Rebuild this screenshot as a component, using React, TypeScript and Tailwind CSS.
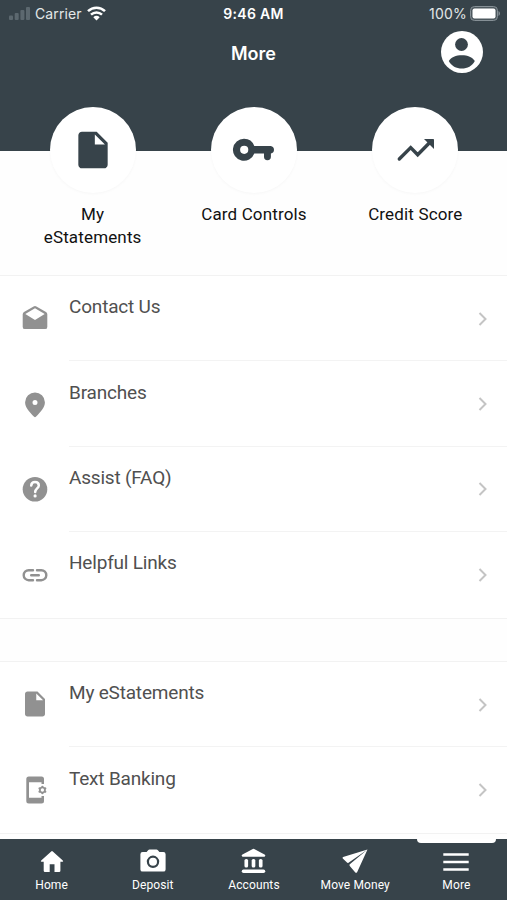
import React from "react";
import { MdInsertDriveFile } from "react-icons/md";

interface Item {
  label: string;
  icon: React.ReactNode;
}

const KeyIcon = () => (
  <svg width="44" height="44" viewBox="0.5 0 44 44" fill="currentColor">
    <path
      fillRule="evenodd"
      d="M12.600 10.800a11 11 0 0 1 10.200 7.200H39.200a3.800 3.800 0 0 1 .2 7.500v3.300a3.400 3.400 0 0 1-6.900 0v-3.300h-9.700A11 11 0 1 1 12.600 10.800zM12.700 17.700a4.100 4.100 0 1 0 0 8.200 4.100 4.100 0 0 0 0-8.200z"
    />
  </svg>
);

const TrendIcon = () => (
  <svg width="44" height="44" viewBox="0 0 44 44">
    <path
      d="m6.300 31 11.400-11.400 7 7.200L37.500 13.800"
      fill="none"
      stroke="currentColor"
      strokeWidth="3.400"
      strokeLinecap="round"
    />
    <path d="M31 11h9.300q.7 0 .7.700V21z" fill="currentColor" />
  </svg>
);

const MailIcon = () => (
  <svg width="30" height="30" viewBox="0 0 30 30" fill="currentColor">
    <path
      fillRule="evenodd"
      d="M13.600 3.400q1.400-.8 2.800 0l9.600 5.500q1.300.8 1.300 2.300v12.700q0 2.200-2.200 2.200H4.900q-2.200 0-2.200-2.200V11.200q0-1.500 1.300-2.300zM15 5.300 5.300 10.900 15 17.100l9.700-6.200z"
    />
  </svg>
);

const PinIcon = () => (
  <svg width="30" height="30" viewBox="0 0 30 30" fill="currentColor">
    <path
      fillRule="evenodd"
      d="M15 3.500a9.900 9.900 0 0 1 9.900 9.700c0 5.200-4 9.400-9 14.500q-.9.900-1.800 0c-5-5.100-9-9.300-9-14.500A9.900 9.900 0 0 1 15 3.500zM15 11a2.500 2.500 0 1 0 0 5 2.500 2.500 0 0 0 0-5z"
    />
  </svg>
);

const HelpIcon = () => (
  <svg width="30" height="30" viewBox="0 0 30 30">
    <circle cx="15" cy="15.200" r="12.300" fill="currentColor" />
    <path
      d="M11.200 11.600c.2-2.300 1.800-3.500 3.800-3.500 2.200 0 3.800 1.400 3.800 3.300 0 2.900-3.600 3.100-3.600 6.600"
      fill="none"
      stroke="white"
      strokeWidth="2.500"
      strokeLinecap="round"
    />
    <circle cx="15.100" cy="21.900" r="1.600" fill="white" />
  </svg>
);

const LinkIcon = () => (
  <svg width="30" height="30" viewBox="0 0 30 30" fill="none" stroke="currentColor" strokeWidth="2.400" strokeLinecap="round">
    <path d="M13 10.200H8.700a5 5 0 0 0 0 10H13M17 10.200h4.300a5 5 0 0 1 0 10H17M11.200 15.200h7.600" />
  </svg>
);

const PhoneIcon = () => (
  <svg width="30" height="30" viewBox="0 0 30 30" fill="currentColor">
    <path d="M8.800 1.500h12.700q2.500 0 2.500 2.500v5h-2.500V7.300H9v15.400h12.500V21H24v5q0 2.500-2.500 2.500H8.800q-2.500 0-2.500-2.500V4q0-2.500 2.500-2.500z" />
    <path d="M22.400 11.800v6.400M19.600 13.400l5.600 3.200M25.200 13.400l-5.600 3.200" stroke="currentColor" strokeWidth="2.300" strokeLinecap="round" />
    <circle cx="22.400" cy="15" r="3.300" />
    <circle cx="22.400" cy="15" r="1.700" fill="white" />
  </svg>
);

const ProfileIcon = () => (
  <svg className="justify-self-end" width="42" height="42" viewBox="0 0 42 42">
    <circle cx="21" cy="21" r="21" fill="white" />
    <circle cx="20.500" cy="13.500" r="6.400" fill="#37434a" />
    <path d="M7.800 30C10 26 15 24.200 20.800 24.200S31.500 26 33.800 30c-2.500 5-7.500 7.500-13 7.500S10.300 35 7.800 30z" fill="#37434a" />
  </svg>
);

const HomeIcon = () => (
  <svg width="24" height="24" viewBox="0 0.5 24 24" fill="currentColor">
    <path d="M11.200 1.900q.8-.7 1.600 0l10 9q1 1.300-.4 1.300h-2v9q0 1.300-1.300 1.300h-4.600v-7.700H9.700v7.700H5q-1.300 0-1.300-1.300v-9H1.600q-1.400 0-.4-1.300z" />
  </svg>
);

const CameraIcon = () => (
  <svg width="26" height="24" viewBox="0 1 26 24" fill="currentColor" overflow="visible">
    <path
      fillRule="evenodd"
      d="M9.500.6h7q.8 0 1.400.7L19.400 3h4q2.200 0 2.200 2.200v15.200q0 2.200-2.200 2.200H2.600Q.4 22.600.4 20.400V5.200Q.4 3 2.600 3h4l1.500-1.700Q8.700.6 9.500.6zM13 6.600a6.200 6.200 0 1 0 0 12.400 6.200 6.200 0 0 0 0-12.400zm0 2.200a4 4 0 1 1 0 8 4 4 0 0 1 0-8z"
    />
  </svg>
);

const BankIcon = () => (
  <svg width="25" height="26" viewBox="0 1 26 26" fill="currentColor" overflow="visible">
    <path d="M12.300.4q.7-.3 1.400 0l10.800 5.700q.7.400.7 1.200 0 1.300-1.300 1.300H2.100Q.8 8.600.8 7.300q0-.8.7-1.200z" />
    <rect x="3.600" y="10.800" width="3.800" height="9" rx="1.700" />
    <rect x="11.100" y="10.800" width="3.800" height="9" rx="1.700" />
    <rect x="18.600" y="10.800" width="3.800" height="9" rx="1.700" />
    <rect x=".8" y="21.800" width="24.400" height="3.700" rx="1.800" />
  </svg>
);

const PlaneIcon = () => (
  <svg width="26" height="25" viewBox="0 0 26 25" fill="currentColor">
    <path d="M25.500.5 1.100 8Q0 8.600.8 9.500L5 13.600q.7.600 1.500.1zM25.500.5 7.800 15.200q-.8.8 0 1.700l5.500 6.500q1 1 1.800-.2z" />
  </svg>
);

const MenuIcon = () => (
  <svg width="26" height="20" viewBox="0 0 26 20" stroke="currentColor" strokeWidth="2.700">
    <path d="M.3 2.500h25.400M.3 10h25.400M.3 17.500h25.400" />
  </svg>
);

const shortcuts: Item[] = [
  { label: "My eStatements", icon: <MdInsertDriveFile size={44} /> },
  { label: "Card Controls", icon: <KeyIcon /> },
  { label: "Credit Score", icon: <TrendIcon /> },
];

const supportItems: Item[] = [
  { label: "Contact Us", icon: <MailIcon /> },
  { label: "Branches", icon: <PinIcon /> },
  { label: "Assist (FAQ)", icon: <HelpIcon /> },
  { label: "Helpful Links", icon: <LinkIcon /> },
];

const serviceItems: Item[] = [
  { label: "My eStatements", icon: <MdInsertDriveFile size={30} /> },
  { label: "Text Banking", icon: <PhoneIcon /> },
];

const tabs: Item[] = [
  { label: "Home", icon: <HomeIcon /> },
  { label: "Deposit", icon: <CameraIcon /> },
  { label: "Accounts", icon: <BankIcon /> },
  { label: "Move Money", icon: <PlaneIcon /> },
  { label: "More", icon: <MenuIcon /> },
];

const StatusBar = () => (
  <div className="grid h-[27px] grid-cols-3 items-center px-[7px] text-[14px] text-[#e3e7e8]">
    <div className="flex items-center pl-[2px]">
      <svg width="21" height="13" viewBox="0 0 21 13" fill="#5c686f">
        <rect x="0" y="8.500" width="4" height="4.500" rx="1" />
        <rect x="5.700" y="6" width="4" height="7" rx="1" />
        <rect x="11.400" y="3" width="4" height="10" rx="1" />
        <rect x="17" y="0" width="4" height="13" rx="1" />
      </svg>
      <span className="ml-[5px] tracking-[0.1px]">Carrier</span>
      <svg className="ml-[5px]" width="19" height="15" viewBox="0 0 19 15" fill="none" stroke="white" strokeWidth="2.500">
        <path d="M1 5.200a12.200 12.200 0 0 1 17 0" />
        <path d="M4 8.600a8 8 0 0 1 11 0" />
        <path d="M9.500 14.500 6.300 11.200a4.700 4.700 0 0 1 6.400 0z" fill="white" stroke="none" />
      </svg>
    </div>
    <div className="text-center font-semibold tracking-[0.3px] text-white">9:46 AM</div>
    <div className="flex items-center justify-end">
      <span className="tracking-[0.2px]">100%</span>
      <svg className="ml-[3px]" width="30" height="15" viewBox="0 0 30 15">
        <rect x=".5" y=".5" width="27" height="14" rx="4" fill="#4d585e" stroke="#869096" />
        <rect x="2.500" y="2.500" width="23" height="10" rx="2" fill="white" />
        <path d="M28.500 5q1.500.8 1.500 2.500T28.500 10z" fill="#869096" />
      </svg>
    </div>
  </div>
);

const Row = ({ item, last }: { item: Item; last: boolean }) => (
  <li className="flex h-[85.400px]">
    <div className="flex w-[70px] shrink-0 justify-center pt-[27.400px] text-[#919191]">
      {item.icon}
    </div>
    <div
      className={
        last
          ? "-ml-px flex flex-1 justify-between"
          : "-ml-px flex flex-1 justify-between border-b border-[#f3f3f3]"
      }
    >
      <span className="pt-[19.300px] text-[19px] leading-6 tracking-[-0.190px] text-[#505050]">
        {item.label}
      </span>
      <svg className="mt-[35.500px] mr-[19px]" width="10" height="14" viewBox="0 0 10 14" fill="none" stroke="#c4c4c4" strokeWidth="2">
        <path d="m1.500 1 6 6-6 6" />
      </svg>
    </div>
  </li>
);

const List = ({ items }: { items: Item[] }) => (
  <ul className="border-y border-[#f2f2f2] bg-white">
    {items.map((item, index) => (
      <Row key={item.label} item={item} last={index === items.length - 1} />
    ))}
  </ul>
);

const App = () => {
  return (
    <div className="flex h-[900px] w-[507px] flex-col overflow-hidden bg-[#fefefe] font-[Roboto,sans-serif]">
      <header className="h-[151px] shrink-0 bg-[#37434a] font-[Inter,sans-serif]">
        <StatusBar />
        <div className="mt-1 grid grid-cols-3 items-center px-[24px]">
          <h1 className="col-start-2 pt-[2px] text-center text-[18px] font-semibold text-white">
            More
          </h1>
          <ProfileIcon />
        </div>
      </header>
      <nav className="-mt-[44px] grid h-[168px] shrink-0 grid-cols-3 pr-[11px] pl-[12px]">
        {shortcuts.map((item) => (
          <div key={item.label} className="flex flex-col items-center">
            <div className="flex size-[86px] items-center justify-center rounded-full bg-white text-[#37434a] shadow-[0_1px_3px_rgba(0,0,0,0.03)]">
              {item.icon}
            </div>
            <span className="mt-[10px] w-[120px] text-center text-[17px] leading-[23px] tracking-[0.150px] text-[#111]">
              {item.label}
            </span>
          </div>
        ))}
      </nav>
      <main className="flex min-h-0 flex-1 flex-col gap-[42.500px] overflow-hidden">
        <List items={supportItems} />
        <List items={serviceItems} />
      </main>
      <footer className="grid h-[61px] shrink-0 grid-cols-5 bg-[#37434a] pl-px text-white">
        {tabs.map((tab) => (
          <div key={tab.label} className="relative flex flex-col items-center">
            {tab.label === "More" && (
              <div className="absolute top-0 h-[4px] w-[79px] rounded-b-[4px] bg-white" />
            )}
            <div className="flex h-[38px] items-center pt-[7px]">{tab.icon}</div>
            <span className="text-[12px] leading-[16px] tracking-[0.100px]">{tab.label}</span>
          </div>
        ))}
      </footer>
    </div>
  );
};

export default App;
